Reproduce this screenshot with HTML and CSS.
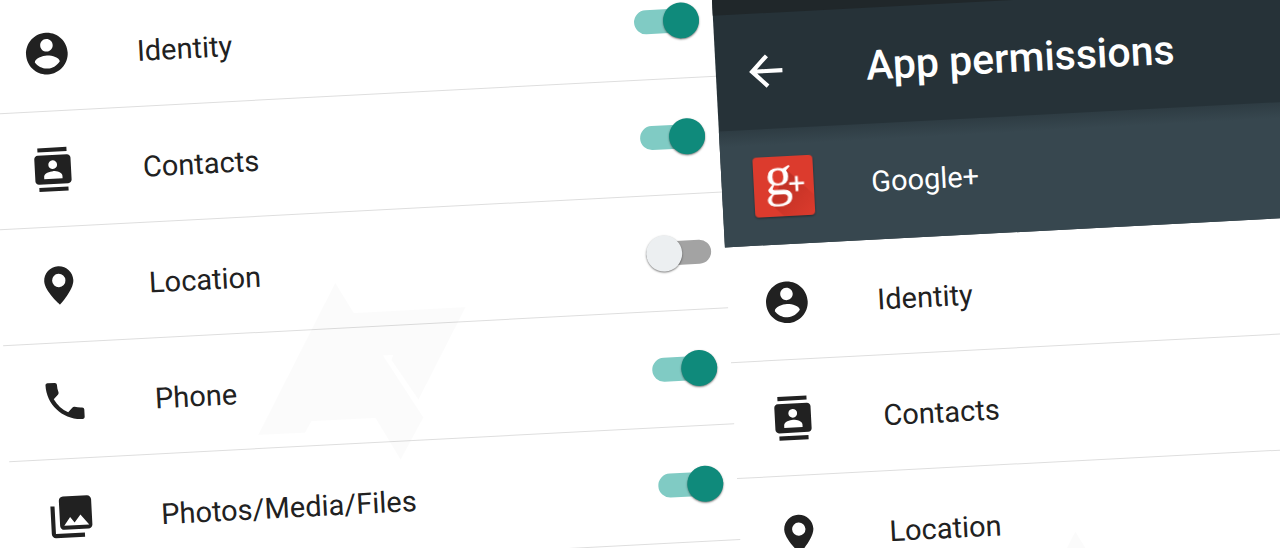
FILE: index.html
```
<!DOCTYPE html>
<html lang="en">
<head>
  <meta charset="UTF-8">
  <meta name="viewport" content="width=device-width, initial-scale=1.0">
  <title>App permissions</title>
  <link rel="stylesheet" href="styles.css">
</head>
<body>
  <!-- Shared icons -->
  <svg class="sprite" aria-hidden="true">
    <symbol id="identity" viewBox="0 0 24 24">
      <path d="M12 2C6.480 2 2 6.480 2 12s4.480 10 10 10 10-4.480 10-10S17.520 2 12 2zm0 3c1.660 0 3 1.340 3 3s-1.340 3-3 3-3-1.340-3-3 1.340-3 3-3zm0 14.200c-2.500 0-4.710-1.280-6-3.220.03-1.990 4-3.080 6-3.080 1.990 0 5.970 1.090 6 3.080-1.290 1.940-3.500 3.220-6 3.220z"/>
    </symbol>
    <symbol id="contacts" viewBox="0 0 24 24">
      <path d="M19 1.500H5v2h14v-2zM5 22.500h14v-2H5v2zM19 5H5c-.9 0-1.700.8-1.700 1.700v10.600c0 .9.8 1.700 1.700 1.700h14c.9 0 1.700-.8 1.700-1.700V6.700c0-.9-.8-1.700-1.700-1.700zm-7 2.600a2.100 2.100 0 1 1 0 4.200 2.100 2.100 0 0 1 0-4.200zM16.400 16.500H7.600v-1.200c0-1.700 2.900-2.500 4.400-2.500s4.400.8 4.400 2.500v1.200z"/>
    </symbol>
    <symbol id="location" viewBox="0 0 24 24">
      <path d="M12 2.800c-3.870 0-7 3.130-7 7 0 4.700 7 11.500 7 11.500s7-6.800 7-11.500c0-3.870-3.130-7-7-7zm0 10.100a3.200 3.200 0 1 1 0-6.400 3.200 3.200 0 0 1 0 6.400z"/>
    </symbol>
    <symbol id="phone" viewBox="0 0 24 24">
      <path d="M6.620 10.790c1.440 2.830 3.760 5.140 6.590 6.590l2.200-2.200c.27-.27.67-.36 1.020-.24 1.120.37 2.330.57 3.570.57.55 0 1 .45 1 1V20c0 .55-.45 1-1 1-9.390 0-17-7.610-17-17 0-.55.45-1 1-1h3.500c.55 0 1 .45 1 1 0 1.250.2 2.450.57 3.570.11.35.03.74-.25 1.020l-2.200 2.200z"/>
    </symbol>
    <symbol id="photos" viewBox="0 0 24 24">
      <path d="M22 16V4c0-1.100-.9-2-2-2H8.500c-1.100 0-2 .9-2 2v12c0 1.100.9 2 2 2H20c1.100 0 2-.9 2-2zm-13.500 0l3-4 2.030 2.710L16.500 11l4 5h-12zM2.300 6.500v13.300c0 1.100.9 2 2 2h13.900v-2H4.300V6.500h-2z"/>
    </symbol>
    <symbol id="watermark" viewBox="0 0 215 181">
      <path d="M85 0L102 31H214L162 121L137 80L139 75H129L166 139L141 180L118 137H54L47 148H0Z"/>
    </symbol>
  </svg>

  <main class="stage">
    <section class="panel">
      <ul class="permissions">
        <li>
          <label class="row">
            <svg class="icon"><use href="#identity"/></svg>
            <span class="name">Identity</span>
            <input class="switch" type="checkbox" checked>
          </label>
        </li>
        <li>
          <label class="row">
            <svg class="icon"><use href="#contacts"/></svg>
            <span class="name">Contacts</span>
            <input class="switch" type="checkbox" checked>
          </label>
        </li>
        <li>
          <label class="row">
            <svg class="icon"><use href="#location"/></svg>
            <span class="name">Location</span>
            <input class="switch" type="checkbox">
          </label>
        </li>
        <li>
          <label class="row">
            <svg class="icon"><use href="#phone"/></svg>
            <span class="name">Phone</span>
            <input class="switch" type="checkbox" checked>
          </label>
        </li>
        <li>
          <label class="row">
            <svg class="icon"><use href="#photos"/></svg>
            <span class="name">Photos/Media/Files</span>
            <input class="switch" type="checkbox" checked>
          </label>
        </li>
      </ul>
      <svg class="watermark" aria-hidden="true"><use href="#watermark"/></svg>
    </section>

    <section class="panel">
      <div class="top">
        <div class="status-bar"></div>
        <header class="toolbar">
          <button class="back" type="button" aria-label="Back">
            <svg class="back-icon" viewBox="0 0 24 24">
              <path d="M20 11H7.830l5.590-5.590L12 4l-8 8 8 8 1.410-1.410L7.830 13H20v-2z"/>
            </svg>
          </button>
          <h1 class="title">App permissions</h1>
        </header>
        <div class="row app">
          <svg class="app-logo" viewBox="0 0 60 60" aria-hidden="true">
            <defs>
              <linearGradient id="fade" x1="0" y1="0" x2="1" y2="1">
                <stop offset="0" stop-color="#a8281e" stop-opacity=".8"/>
                <stop offset="1" stop-color="#b02a20" stop-opacity="0"/>
              </linearGradient>
            </defs>
            <rect width="60" height="60" rx="4" fill="#dc3b2d"/>
            <path d="M34 14L60 40V60H29L16 47Z" fill="url(#fade)"/>
            <text class="logo-g" x="11" y="38">g</text>
            <text class="logo-plus" x="43" y="38">+</text>
          </svg>
          <span class="name">Google+</span>
        </div>
      </div>
      <div class="list">
        <ul class="permissions">
          <li class="row">
            <svg class="icon"><use href="#identity"/></svg>
            <span class="name">Identity</span>
          </li>
          <li class="row">
            <svg class="icon"><use href="#contacts"/></svg>
            <span class="name">Contacts</span>
          </li>
          <li class="row">
            <svg class="icon"><use href="#location"/></svg>
            <span class="name">Location</span>
          </li>
        </ul>
        <svg class="watermark" aria-hidden="true"><use href="#watermark"/></svg>
      </div>
    </section>
  </main>
</body>
</html>
```

FILE: styles.css
```
* {
  margin: 0;
  padding: 0;
  box-sizing: border-box;
}

body {
  height: 100vh;
  overflow: hidden;
  background: #fff;
  color: #212121;
  font-family: Roboto, sans-serif;
}

.sprite {
  display: none;
}

/* Both screens sit on one tilted sheet */
.stage {
  display: grid;
  grid-template-columns: 23fr 18fr;
  margin: -2px 0 0 -15px;
  transform: rotate(-3deg);
  transform-origin: 15px 2px;
}

.panel,
.list {
  position: relative;
}

.permissions {
  list-style: none;
}

.row {
  display: flex;
  align-items: center;
  height: 116px;
  padding: 0 14px 0 29px;
  border-bottom: 1px solid #dedede;
}

.icon {
  width: 50px;
  height: 50px;
  margin: 0 5px;
  fill: #212121;
}

.name {
  flex: 1;
  margin-left: 60px;
  font-size: 29px;
  line-height: 36px;
}

.permissions .name {
  padding-top: 4px;
}

.switch {
  appearance: none;
  display: flex;
  align-items: center;
  width: 65px;
  height: 24px;
  border-radius: 12px;
  background: #a3a3a3;
  cursor: pointer;
}

.switch::before {
  content: "";
  width: 36px;
  height: 36px;
  flex: none;
  border-radius: 50%;
  background: #eceff1;
  box-shadow: 0 1px 2px rgba(0, 0, 0, 0.5);
}

.switch:checked {
  justify-content: flex-end;
  background: #80cbc4;
}

.switch:checked::before {
  background: #0f8a7b;
}

.top {
  background: #263238;
  color: #fff;
}

.status-bar {
  height: 55px;
  background: #20272a;
}

.toolbar {
  display: flex;
  align-items: center;
  height: 116px;
  padding-left: 25px;
}

.back {
  width: 50px;
  height: 50px;
  border: none;
  background: none;
  cursor: pointer;
}

.back-icon {
  display: block;
  width: 50px;
  height: 50px;
  fill: #fff;
}

.title {
  margin-left: 75px;
  font-size: 41px;
  font-weight: 500;
  line-height: 48px;
}

.app {
  padding-left: 32px;
  border-bottom: none;
  background: linear-gradient(#2e3c43, #37474f 16px);
}

.app .name {
  margin-left: 57px;
}

.app-logo {
  width: 60px;
  height: 60px;
  overflow: visible;
  filter: drop-shadow(0 1px 1px rgba(0, 0, 0, 0.4));
}

.logo-g,
.logo-plus {
  fill: #fff;
}

.logo-g {
  font-family: "Liberation Serif", serif;
  font-size: 56px;
}

.logo-plus {
  font-family: Roboto, sans-serif;
  font-size: 30px;
  text-anchor: middle;
}

.watermark {
  position: absolute;
  top: 302px;
  left: 250px;
  width: 215px;
  height: 181px;
  fill: rgba(0, 0, 0, 0.015);
  pointer-events: none;
}
```
